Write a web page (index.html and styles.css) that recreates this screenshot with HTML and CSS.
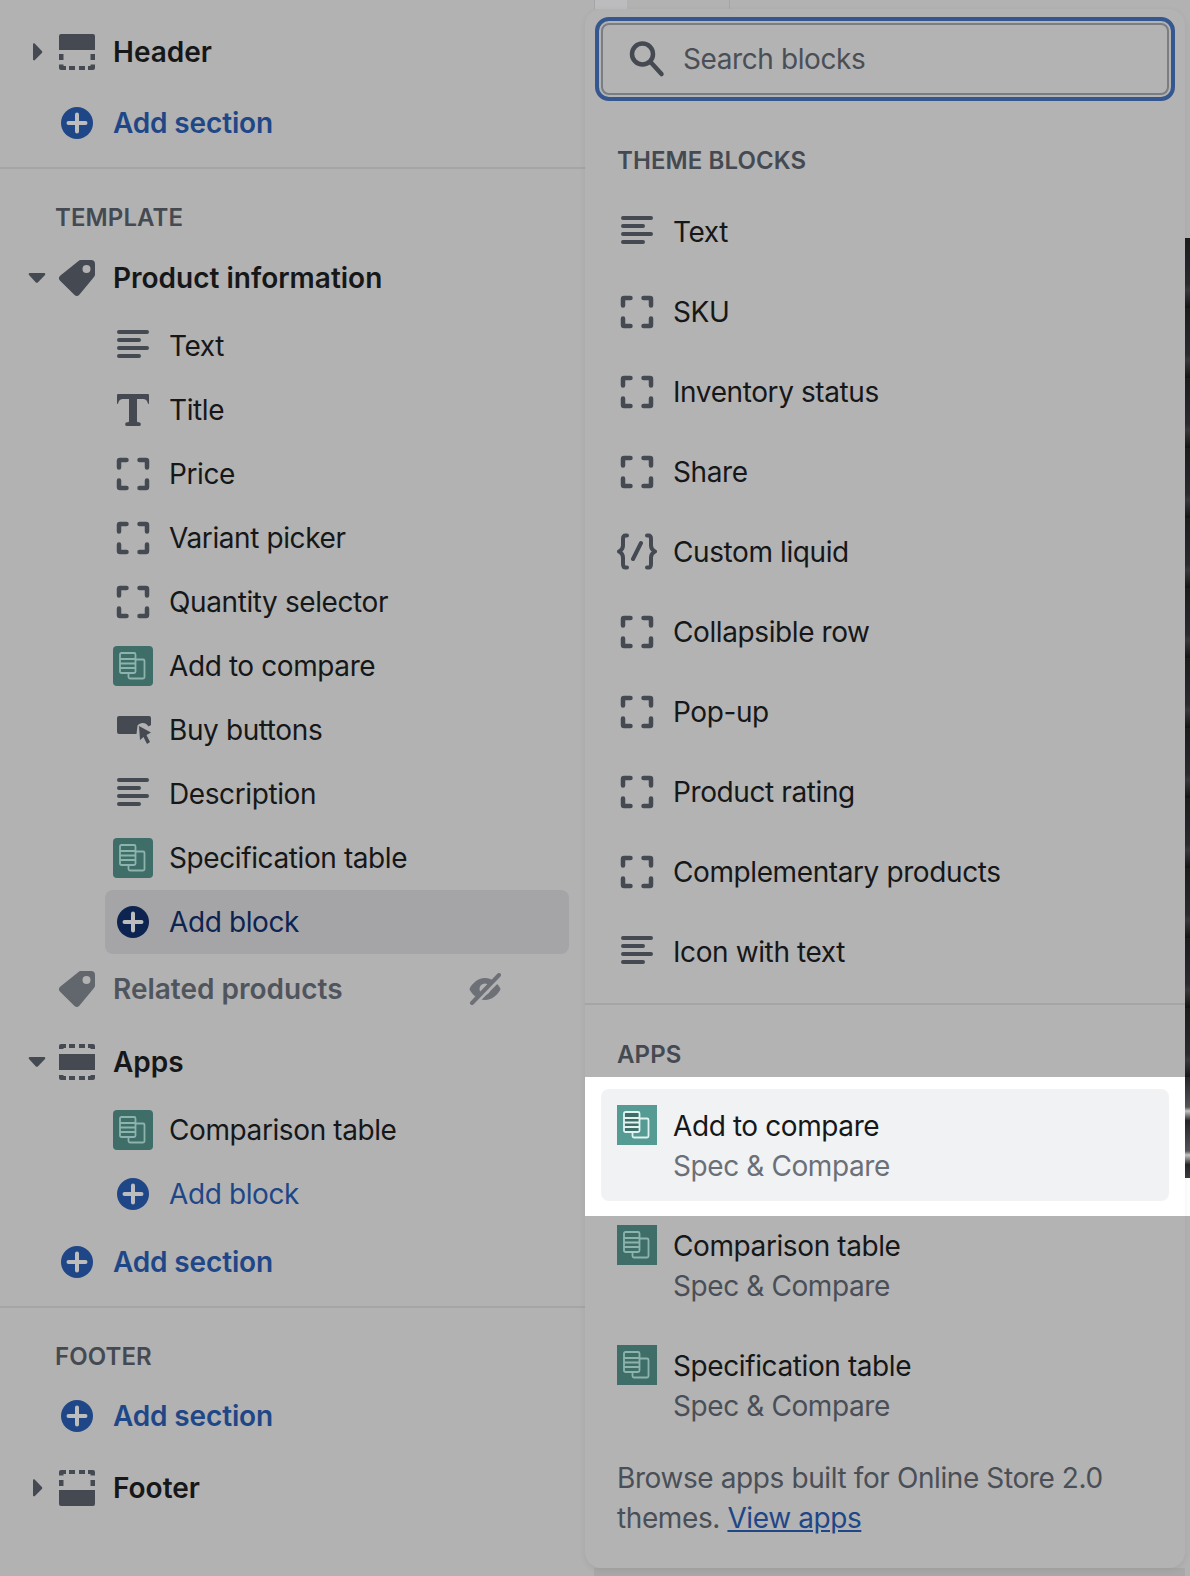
FILE: index.html
```html
<!DOCTYPE html>
<html lang="en">
<head>
<meta charset="utf-8">
<title>Add block</title>
<link rel="stylesheet" href="styles.css">
</head>
<body>
<svg class="defs" width="0" height="0" aria-hidden="true">
  <symbol id="i-caret-r" viewBox="0 0 32 32"><path d="M12 8.500c0-1 1.200-1.500 1.900-.8l7 7.200c.5.600.5 1.500 0 2l-7 7.200c-.7.700-1.900.2-1.900-.8z"/></symbol>
  <symbol id="i-caret-d" viewBox="0 0 32 32"><path d="M8.800 11h14.400c1 0 1.500 1.200.8 1.900l-7.200 7.500c-.5.500-1.400.5-1.900 0L8 12.900c-.7-.7-.2-1.900.8-1.900z"/></symbol>
  <symbol id="i-header" viewBox="0 0 40 40"><path d="M4 2h32a2 2 0 0 1 2 2v14H2V4a2 2 0 0 1 2-2zM2 22h4.500v6H2zM33.500 22H38v6h-4.500zM2 32.500h4.500V34H9v4H4a2 2 0 0 1-2-2zM12 34h6v4h-6zM22 34h6v4h-6zM31 34h2.500v-1.500H38V36a2 2 0 0 1-2 2h-5z"/></symbol>
  <symbol id="i-footer" viewBox="0 0 40 40"><path d="M4 38h32a2 2 0 0 0 2-2V22H2v14a2 2 0 0 0 2 2zM2 12h4.500v6H2zM33.500 12H38v6h-4.500zM2 7.500h4.500V6H9V2H4a2 2 0 0 0-2 2zM12 6h6V2h-6zM22 6h6V2h-6zM31 6h2.500v1.500H38V4a2 2 0 0 0-2-2h-5z"/></symbol>
  <symbol id="i-apps" viewBox="0 0 40 40"><path d="M2 12h36v16H2zM2 7h4.500V6H9V2H4a2 2 0 0 0-2 2zM12 6h6V2h-6zM22 6h6V2h-6zM31 6h2.500v1H38V4a2 2 0 0 0-2-2h-5zM2 33h4.500v1H9v4H4a2 2 0 0 1-2-2zM12 34h6v4h-6zM22 34h6v4h-6zM31 34h2.500v-1H38v3a2 2 0 0 1-2 2h-5z"/></symbol>
  <symbol id="i-tag" viewBox="0 0 40 40"><path fill-rule="evenodd" d="M24 2h10a4 4 0 0 1 4 4v10.500a4 4 0 0 1-1.200 2.800L22.300 36.800a3.600 3.600 0 0 1-5 0L3.100 22.700a3.600 3.600 0 0 1 0-5L21.200 3.200A4 4 0 0 1 24 2zm5.500 5a4 4 0 1 0 0 8 4 4 0 0 0 0-8z"/></symbol>
  <symbol id="i-plus" viewBox="0 0 40 40"><circle cx="20" cy="20" r="16"/><path class="plus-mark" d="M20 11.500v17M11.500 20h17"/></symbol>
  <symbol id="i-lines" viewBox="0 0 40 40"><path class="stroke" d="M6 6h28M6 14h20M6 22h28M6 30h20" stroke-width="4"/></symbol>
  <symbol id="i-title" viewBox="0 0 40 40"><path d="M5 4h30a1 1 0 0 1 1 1v8.500c0 .6-.9.700-1.100.1C34 10 32.500 9 29.500 9H24v22c0 .8.700 1.300 1.500 1.300h.5a1.800 1.800 0 0 1 0 3.700H14a1.800 1.800 0 0 1 0-3.700h.5c.8 0 1.500-.5 1.500-1.300V9h-5.500C7.500 9 6 10 5.100 13.600c-.2.600-1.100.5-1.100-.1V5a1 1 0 0 1 1-1z"/></symbol>
  <symbol id="i-block" viewBox="0 0 40 40"><path class="stroke" d="M6 13.500V7a1 1 0 0 1 1-1h6.500M26.500 6H33a1 1 0 0 1 1 1v6.500M34 26.500V33a1 1 0 0 1-1 1h-6.500M13.500 34H7a1 1 0 0 1-1-1v-6.500" stroke-width="4.500"/></symbol>
  <symbol id="i-buy" viewBox="0 0 40 40"><path d="M6 6h30a2 2 0 0 1 2 2v7l-2.500 1.500C33 12 27 12 24.500 15.500l-1 8.500H6a2 2 0 0 1-2-2V8a2 2 0 0 1 2-2z"/><path d="M26 16l12 6.500-4.500 2.500 3.500 7-3 2-3.500-7-3.500 3z"/></symbol>
  <symbol id="i-liquid" viewBox="0 0 40 40"><path class="stroke" d="M10 3.500H8.500C6.500 3.500 6 5 6 7v6.500c0 2.500-1 4.500-4 6 3 1.500 4 3.500 4 6V32c0 2 .5 3.500 2.500 3.500H10M30 3.500h1.500c2 0 2.500 1.500 2.500 3.500v6.500c0 2.500 1 4.500 4 6-3 1.500-4 3.500-4 6V32c0 2-.5 3.500-2.500 3.500H30M24 11l-8 16" stroke-width="4"/></symbol>
  <symbol id="i-eye" viewBox="0 0 32 32"><path fill-rule="evenodd" d="M16 5C8.500 5 3 11 .8 15.200c-.4.500-.4 1.200 0 1.700C3 21 8.500 27 16 27s13-6 15.200-10.100c.4-.5.400-1.200 0-1.700C29 11 23.500 5 16 5zm0 5.500a5.500 5.500 0 1 1 0 11 5.500 5.500 0 0 1 0-11z"/><path class="eye-gap" d="M5 30L30 5"/><path class="eye-slash" d="M3 30L30 2"/></symbol>
  <symbol id="i-search" viewBox="0 0 40 40"><circle class="stroke" cx="15.500" cy="15" r="10.500" fill="none" stroke-width="4.500"/><path class="stroke" d="M23.500 23L34.500 35" stroke-width="4.500"/></symbol>
  <symbol id="i-app" viewBox="0 0 40 40"><rect class="app-shape" x="15.500" y="13.500" width="16" height="19" rx="1.500"/><rect class="app-shape app-front" x="7" y="7" width="15.500" height="20" rx="1.500"/><path class="app-shape" d="M7 13h15.500M7 17.500h15.500M7 22h15.500"/></symbol>
</svg>

<div class="app">
  <aside class="sidebar">
    <div class="top-group">
      <div class="row section"><span class="caret"><svg><use href="#i-caret-r"/></svg></span><svg class="icon"><use href="#i-header"/></svg><span>Header</span></div>
      <div class="row add add-top"><span class="caret"></span><svg class="icon plus"><use href="#i-plus"/></svg><span>Add section</span></div>
    </div>
    <div class="group">
      <h2 class="heading">Template</h2>
      <div class="row section product"><span class="caret"><svg><use href="#i-caret-d"/></svg></span><svg class="icon"><use href="#i-tag"/></svg><span>Product information</span></div>
      <ul class="blocks">
        <li class="block"><svg class="icon"><use href="#i-lines"/></svg><span>Text</span></li>
        <li class="block"><svg class="icon"><use href="#i-title"/></svg><span>Title</span></li>
        <li class="block"><svg class="icon"><use href="#i-block"/></svg><span>Price</span></li>
        <li class="block"><svg class="icon"><use href="#i-block"/></svg><span>Variant picker</span></li>
        <li class="block"><svg class="icon"><use href="#i-block"/></svg><span>Quantity selector</span></li>
        <li class="block"><svg class="icon app-icon"><use href="#i-app"/></svg><span>Add to compare</span></li>
        <li class="block"><svg class="icon"><use href="#i-buy"/></svg><span>Buy buttons</span></li>
        <li class="block"><svg class="icon"><use href="#i-lines"/></svg><span>Description</span></li>
        <li class="block"><svg class="icon app-icon"><use href="#i-app"/></svg><span>Specification table</span></li>
        <li class="block add-block active"><svg class="icon plus"><use href="#i-plus"/></svg><span>Add block</span></li>
      </ul>
      <div class="row section muted"><span class="caret"></span><svg class="icon"><use href="#i-tag"/></svg><span>Related products</span><svg class="eye"><use href="#i-eye"/></svg></div>
      <div class="row section"><span class="caret"><svg><use href="#i-caret-d"/></svg></span><svg class="icon"><use href="#i-apps"/></svg><span>Apps</span></div>
      <ul class="blocks">
        <li class="block"><svg class="icon app-icon"><use href="#i-app"/></svg><span>Comparison table</span></li>
        <li class="block add-block"><svg class="icon plus"><use href="#i-plus"/></svg><span>Add block</span></li>
      </ul>
      <div class="row add"><span class="caret"></span><svg class="icon plus"><use href="#i-plus"/></svg><span>Add section</span></div>
    </div>
    <div class="group last">
      <h2 class="heading">Footer</h2>
      <div class="row add add-footer"><span class="caret"></span><svg class="icon plus"><use href="#i-plus"/></svg><span>Add section</span></div>
      <div class="row section"><span class="caret"><svg><use href="#i-caret-r"/></svg></span><svg class="icon"><use href="#i-footer"/></svg><span>Footer</span></div>
    </div>
  </aside>

  <div class="center">
    <div class="topbar"><span class="tab"></span></div>
    <section class="panel">
      <div class="search"><svg class="icon"><use href="#i-search"/></svg><span>Search blocks</span></div>
      <h2 class="heading panel-heading first">Theme blocks</h2>
      <ul class="options">
        <li class="option"><svg class="icon"><use href="#i-lines"/></svg><span>Text</span></li>
        <li class="option"><svg class="icon"><use href="#i-block"/></svg><span>SKU</span></li>
        <li class="option"><svg class="icon"><use href="#i-block"/></svg><span>Inventory status</span></li>
        <li class="option"><svg class="icon"><use href="#i-block"/></svg><span>Share</span></li>
        <li class="option"><svg class="icon"><use href="#i-liquid"/></svg><span>Custom liquid</span></li>
        <li class="option"><svg class="icon"><use href="#i-block"/></svg><span>Collapsible row</span></li>
        <li class="option"><svg class="icon"><use href="#i-block"/></svg><span>Pop-up</span></li>
        <li class="option"><svg class="icon"><use href="#i-block"/></svg><span>Product rating</span></li>
        <li class="option"><svg class="icon"><use href="#i-block"/></svg><span>Complementary products</span></li>
        <li class="option"><svg class="icon"><use href="#i-lines"/></svg><span>Icon with text</span></li>
      </ul>
      <hr class="rule">
      <h2 class="heading panel-heading">Apps</h2>
      <div class="spotlight">
        <div class="app-item current"><svg class="icon app-icon square"><use href="#i-app"/></svg><div class="app-text"><div>Add to compare</div><div class="vendor">Spec &amp; Compare</div></div></div>
      </div>
      <div class="app-item"><svg class="icon app-icon square"><use href="#i-app"/></svg><div class="app-text"><div>Comparison table</div><div class="vendor">Spec &amp; Compare</div></div></div>
      <div class="app-item spaced"><svg class="icon app-icon square"><use href="#i-app"/></svg><div class="app-text"><div>Specification table</div><div class="vendor">Spec &amp; Compare</div></div></div>
      <p class="browse">Browse apps built for Online Store 2.0<br>themes. <a href="#">View apps</a></p>
    </section>
    <div class="under"></div>
  </div>

  <div class="strip">
    <div class="strip-blank"></div>
    <div class="strip-image"></div>
    <div class="strip-image bright"></div>
    <div class="strip-white"></div>
    <div class="strip-rest"></div>
  </div>
</div>
</body>
</html>
```

FILE: styles.css
```css
* { box-sizing: border-box; }
html, body { margin: 0; padding: 0; }
body {
  width: 1190px;
  height: 1576px;
  overflow: hidden;
  background: #b2b2b2;
  color: #161719;
  font-family: Inter, "Liberation Sans", sans-serif;
  font-size: 28px;
  line-height: 40px;
  letter-spacing: -.4px;
}
ul { list-style: none; margin: 0; padding: 0; }
h2, p { margin: 0; }
.defs { position: absolute; }

.stroke { fill: none; stroke: currentColor; stroke-linecap: round; stroke-linejoin: round; }

.app { display: flex; height: 1576px; }

/* Sidebar */
.sidebar { width: 585px; flex: none; }
.top-group { padding-top: 16px; height: 167px; }
.group { border-top: 2px solid #a5a5a8; padding-top: 33px; }
.top-group + .group { height: 1139px; }
.heading {
  height: 32px;
  padding-left: 55px;
  color: #454a52;
  font-size: 24px;
  line-height: 32px;
  font-weight: 600;
  text-transform: uppercase;
  letter-spacing: .1px;
}

.row {
  display: flex;
  align-items: center;
  gap: 16px;
  height: 72px;
  padding: 0 84px 0 21px;
}
.product { margin-top: 8px; }
.caret { width: 32px; height: 32px; margin-right: -12px; flex: none; color: #454a52; }
.caret svg { display: block; width: 32px; height: 32px; fill: currentColor; }
.icon { width: 40px; height: 40px; flex: none; color: #454a52; fill: currentColor; }
.section { font-weight: 600; letter-spacing: 0; }
.add-top { height: 70px; }
.add-footer { margin-top: 7px; }

.add, .add-block { color: #1f4788; }
.add { font-weight: 600; letter-spacing: -.15px; }
.plus { color: #1f4788; }
.plus-mark { fill: none; stroke: #bdbdbd; stroke-width: 4px; stroke-linecap: round; }

.muted { margin-top: -1px; margin-bottom: 1px; color: #50555d; }
.muted .icon { color: #62666d; }
.eye { width: 32px; height: 32px; margin-left: auto; flex: none; fill: #6d7177; color: #6d7177; }
.eye-gap { fill: none; stroke: #b2b2b2; stroke-width: 6px; }
.eye-slash { fill: none; stroke: #6d7177; stroke-width: 4px; stroke-linecap: round; }

.blocks { margin-left: 105px; width: 464px; }
.block {
  display: flex;
  align-items: center;
  gap: 16px;
  height: 64px;
  padding-left: 8px;
  border-radius: 8px;
}
.active { background: #a5a5a8; color: #0d2350; }
.active .plus { color: #0d2350; }

.app-icon { border-radius: 4px; background: #3f6e68; color: #8db3ad; }
.app-icon.square { border-radius: 0; }
.app-shape { fill: none; stroke: currentColor; stroke-width: 1.800px; }
.app-front { fill: #3f6e68; }
.current .app-icon { background: #569a94; color: #e0f3f0; }
.current .app-front { fill: #569a94; }

/* Popover */
.center { width: 600px; flex: none; display: flex; flex-direction: column; }
.topbar { height: 9px; display: flex; padding-left: 9px; }
.tab { width: 33px; height: 9px; background: #bcbcbe; border-left: 1px solid #a5a5a8; }
.topbar::after { content: ""; width: 102px; height: 9px; border-right: 1px solid #a5a5a8; }
.panel {
  height: 1559px;
  flex: none;
  padding: 14px 16px 0;
  background: #b3b3b3;
  border-radius: 16px;
  box-shadow: 0 2px 6px rgba(0, 0, 0, .07);
  position: relative;
}
.under { flex: 1; margin-left: 9px; background: #a8a8a8; }

.search {
  display: flex;
  align-items: center;
  gap: 16px;
  height: 72px;
  padding-left: 24px;
  border: 2px solid #7a7d82;
  border-radius: 8px;
  outline: 4px solid #35578f;
  outline-offset: 2px;
  color: #4a4f57;
}
.panel-heading { padding-left: 16px; }
.panel-heading.first { margin-top: 50px; margin-bottom: 15px; }

.option {
  display: flex;
  align-items: center;
  gap: 16px;
  height: 80px;
  padding-left: 16px;
}
.rule { height: 2px; margin: 11px -16px 34px; border: 0; background: #a5a5a8; }

.spotlight {
  margin: 6px -16px 0;
  padding: 12px 16px 15px;
  background: #fff;
}
.app-item {
  display: flex;
  gap: 16px;
  height: 112px;
  padding: 16px;
  border-radius: 8px;
}
.app-text { padding-top: 1px; }
.spotlight + .app-item { margin-top: -7px; }
.spaced { margin-top: 8px; }
.current { background: #f1f2f4; }
.vendor { color: #4a4f57; }
.current .vendor { color: #6b7078; }

.browse { margin-top: 17px; padding-left: 16px; color: #4a4f57; }
.browse a { color: #1f4788; text-decoration: underline; }

/* Edge of the preview behind the popover */
.strip { width: 5px; flex: none; display: flex; flex-direction: column; }
.strip-blank { height: 238px; background: #b2b2b2; }
.strip-image {
  height: 839px;
  background: repeating-linear-gradient(180deg, #1d1d20 0, #2c2c30 46px, #3a3a3e 52px, #141416 70px);
}
.strip-image.bright {
  height: 101px;
  background: repeating-linear-gradient(180deg, #26262a 0, #55555a 30px, #c8c8c8 34px, #1f1f22 44px);
}
.strip-white { height: 38px; background: #fff; }
.strip-rest { flex: 1; background: #b2b2b2; }
```
